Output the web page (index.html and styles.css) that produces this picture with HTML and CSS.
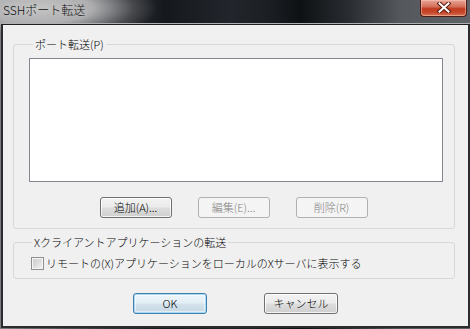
FILE: index.html
```html
<!DOCTYPE html>
<html lang="ja">
<head>
<meta charset="utf-8">
<title>SSHポート転送</title>
<link rel="stylesheet" href="styles.css">
</head>
<body>
<div class="window">
  <div class="titlebar">
    <span class="title">SSHポート転送</span>
    <div class="close">
      <svg width="14" height="11" viewBox="0 0 14 11">
        <path d="M2.5 1.5 L11.5 9.5 M11.5 1.5 L2.5 9.5" stroke="#5a1a10" stroke-width="4" stroke-linecap="square"/>
        <path d="M2.5 1.5 L11.5 9.5 M11.5 1.5 L2.5 9.5" stroke="#ffffff" stroke-width="2" stroke-linecap="square"/>
      </svg>
    </div>
  </div>
  <div class="client">
    <fieldset class="group group-port">
      <legend class="group-label">ポート転送(P)</legend>
      <div class="listbox"></div>
      <div class="btnrow">
        <button class="btn" type="button">追加(A)...</button>
        <button class="btn" type="button" disabled>編集(E)...</button>
        <button class="btn" type="button" disabled>削除(R)</button>
      </div>
    </fieldset>
    <fieldset class="group group-x">
      <legend class="group-label group-label-x">Xクライアントアプリケーションの転送</legend>
      <label class="check"><span class="box"></span><span class="check-text">リモートの(X)アプリケーションをローカルのXサーバに表示する</span></label>
    </fieldset>
    <div class="dlgbtns">
      <button class="btn btn-wide btn-default" type="button">OK</button>
      <button class="btn btn-wide" type="button">キャンセル</button>
    </div>
  </div>
</div>
</body>
</html>
```
FILE: styles.css
```css
* { box-sizing: border-box; }
html, body { margin: 0; padding: 0; background: #f0f0f0; }
body {
  font-family: "Noto Sans CJK JP", "Noto Sans", sans-serif;
  font-size: 11px;
  font-weight: 300;
  color: #000;
}
.window {
  width: 470px;
  height: 329px;
  display: flex;
  flex-direction: column;
  background:
    radial-gradient(ellipse 120px 34px at 38px 8px, rgba(196,196,196,1) 0%, rgba(180,180,182,0.95) 45%, rgba(120,122,125,0.4) 80%, rgba(0,0,0,0) 100%),
    linear-gradient(90deg, #7a7c7f 0px, #3a3c40 95px, #15181c 165px, #22252b 230px, #1b1e22 270px, #0e1114 300px, #2a2d31 350px, #54575b 400px, #5f6266 470px);
}
.titlebar {
  height: 24px;
  display: flex;
  align-items: flex-start;
  flex: none;
}
.title {
  padding-left: 3px;
  font-size: 12px;
  line-height: 20px;
  color: #111;
  text-shadow: 0 0 6px rgba(220,220,220,0.7);
}
.close {
  margin-left: auto;
  margin-right: 3px;
  width: 47px;
  height: 17px;
  border: 1px solid #4b1d15;
  border-top: none;
  border-radius: 0 0 4px 4px;
  background: linear-gradient(180deg, #e7a595 0%, #d5725d 40%, #c0391f 55%, #c84a2c 80%, #d9785a 100%);
  box-shadow: inset 0 0 0 1px rgba(255,210,200,0.45);
  display: flex;
  align-items: center;
  justify-content: center;
}
.close svg { display: block; margin-top: -1px; }
.client {
  flex: 1;
  margin: 0 0 1px 1px;
  border: 2px solid #2b2c2e;
  border-top: 1px solid #1e1f21;
  box-shadow: 0 -1px 0 #aeb0b3;
  background: #f0f0f0;
  padding-top: 12px;
}
.group {
  margin: 0 13px 0 10px;
  padding: 0;
  border: 1px solid #d6d8da;
  border-radius: 3px;
  min-inline-size: 0;
}
.group-label {
  margin-left: 4px;
  padding: 0 2px;
  line-height: 14px;
  font-size: 11px;
}
.group-label-x { margin-left: 1px; }
.group-port {
  padding: 7px 11px 10px 15px;
}
.listbox {
  height: 124px;
  background: #fff;
  border: 1px solid #828790;
}
.btnrow {
  margin-top: 15px;
  display: flex;
  justify-content: center;
  gap: 26px;
  padding-right: 5px;
}
.btn {
  width: 72px;
  height: 21px;
  padding: 0;
  font-family: "Noto Sans CJK JP", "Noto Sans", sans-serif;
  font-size: 11px;
  font-weight: 300;
  line-height: 19px;
  color: #000;
  border: 1px solid #707070;
  border-radius: 3px;
  background: linear-gradient(180deg, #f2f2f2 0%, #ebebeb 48%, #dddddd 52%, #cfcfcf 100%);
  box-shadow: inset 0 0 0 1px rgba(255,255,255,0.75);
}
.btn:disabled {
  color: #838383;
  border-color: #adb2b5;
  background: #f4f4f4;
  box-shadow: none;
}
.group-x {
  margin-top: 6px;
  padding: 7px 10px 8px 17px;
}
.check {
  display: flex;
  align-items: center;
  height: 14px;
  line-height: 14px;
}
.box {
  width: 13px;
  height: 13px;
  flex: none;
  margin-right: 2px;
  border: 1px solid #8e8f8f;
  background: linear-gradient(135deg, #c9c9c9 0%, #e2e2e2 60%, #f4f4f4 100%);
  box-shadow: inset 0 0 0 1px #f6f6f6;
}
.dlgbtns {
  margin-top: 14px;
  display: flex;
  justify-content: center;
  gap: 57px;
}
.btn-wide { width: 74px; }
.btn-default {
  border-color: #3c7fb1;
  background: linear-gradient(180deg, #eef6fb 0%, #e3eef5 48%, #d3e2ec 52%, #c7d8e4 100%);
  box-shadow: inset 0 0 0 1px #a9d8f2, inset 0 0 0 2px rgba(255,255,255,0.5);
}
```
